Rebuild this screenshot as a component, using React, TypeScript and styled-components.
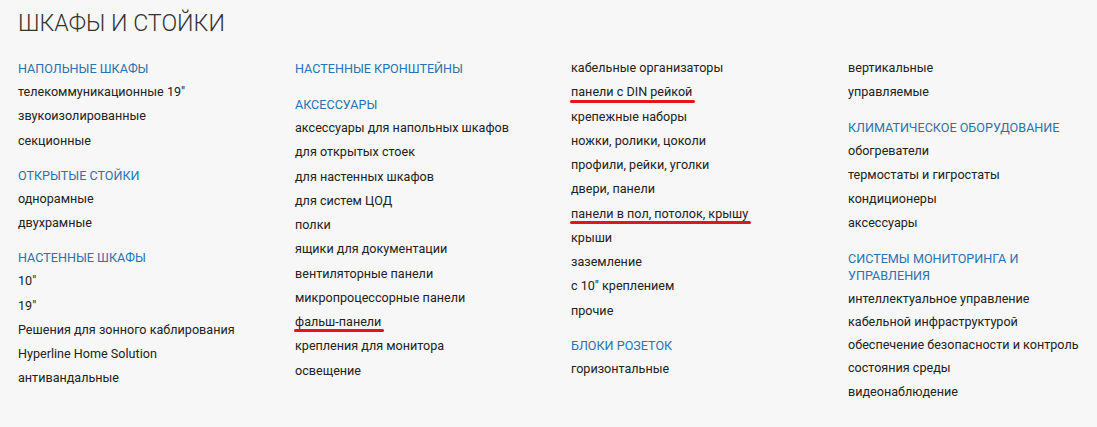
import styled, { createGlobalStyle } from "styled-components";

const GlobalStyle = createGlobalStyle`
  html, body {
    margin: 0;
    padding: 0;
    background: #f7f7f7;
  }
  body {
    font-family: Roboto, "Noto Sans", Arial, sans-serif;
    color: #222;
  }
`;

type Item = { label: string; marked?: boolean };
type Group = { title: string; items: Item[] };

const columns: Group[][] = [
    [
        {
            title: "Напольные шкафы",
            items: [{ label: "телекоммуникационные 19\"" }, { label: "звукоизолированные" }, { label: "секционные" }],
        },
        {
            title: "Открытые стойки",
            items: [{ label: "однорамные" }, { label: "двухрамные" }],
        },
        {
            title: "Настенные шкафы",
            items: [
                { label: "10\"" },
                { label: "19\"" },
                { label: "Решения для зонного каблирования" },
                { label: "Hyperline Home Solution" },
                { label: "антивандальные" },
            ],
        },
    ],
    [
        { title: "Настенные кронштейны", items: [] },
        {
            title: "Аксессуары",
            items: [
                { label: "аксессуары для напольных шкафов" },
                { label: "для открытых стоек" },
                { label: "для настенных шкафов" },
                { label: "для систем ЦОД" },
                { label: "полки" },
                { label: "ящики для документации" },
                { label: "вентиляторные панели" },
                { label: "микропроцессорные панели" },
                { label: "фальш-панели", marked: true },
                { label: "крепления для монитора" },
                { label: "освещение" },
            ],
        },
    ],
    [
        {
            title: "",
            items: [
                { label: "кабельные организаторы" },
                { label: "панели с DIN рейкой", marked: true },
                { label: "крепежные наборы" },
                { label: "ножки, ролики, цоколи" },
                { label: "профили, рейки, уголки" },
                { label: "двери, панели" },
                { label: "панели в пол, потолок, крышу", marked: true },
                { label: "крыши" },
                { label: "заземление" },
                { label: "с 10\" креплением" },
                { label: "прочие" },
            ],
        },
        { title: "Блоки розеток", items: [{ label: "горизонтальные" }] },
    ],
    [
        { title: "", items: [{ label: "вертикальные" }, { label: "управляемые" }] },
        {
            title: "Климатическое оборудование",
            items: [
                { label: "обогреватели" },
                { label: "термостаты и гигростаты" },
                { label: "кондиционеры" },
                { label: "аксессуары" },
            ],
        },
        {
            title: "Системы мониторинга и управления",
            items: [
                { label: "интеллектуальное управление кабельной инфраструктурой" },
                { label: "обеспечение безопасности и контроль состояния среды" },
                { label: "видеонаблюдение" },
            ],
        },
    ],
];

const Page = styled.div`
  padding: 8px 18px 20px;
`;

const Title = styled.h1`
  margin: 0 0 22px;
  font-size: 23.2px;
  font-weight: 300;
  line-height: 30px;
  color: #333;
  text-transform: uppercase;
`;

const Grid = styled.div`
  display: grid;
  grid-template-columns: 277px 276px 277px 1fr;
`;

const Column = styled.div`
  display: flex;
  flex-direction: column;
`;

const GroupBox = styled.div<{ $untitled?: boolean; $empty?: boolean }>`
  display: flex;
  flex-direction: column;
  margin-top: ${({ $untitled }) => ($untitled ? "-4px" : "0")};
  padding-bottom: ${({ $empty }) => ($empty ? "2px" : "0")};

  & + & {
    margin-top: 14px;
  }
`;

const GroupTitle = styled.a`
  display: block;
  max-width: 236px;
  margin-bottom: 3px;
  font-size: 12.6px;
  line-height: 17px;
  color: #2a72b2;
  text-transform: uppercase;
  text-decoration: none;
`;

const Link = styled.a<{ $marked?: boolean }>`
  display: block;
  font-size: 12.6px;
  line-height: 24.25px;
  color: #222;
  text-decoration: none;

  & span {
    position: relative;
    display: inline-block;
  }

  & span::after {
    content: "";
    display: ${({ $marked }) => ($marked ? "block" : "none")};
    position: absolute;
    left: -1px;
    right: -3px;
    bottom: 2px;
    height: 3px;
    border-radius: 2px;
    background: #e5141b;
  }
`;

// long entries in the last column break onto two lines
const WrapLink = styled(Link)`
  max-width: 236px;
  line-height: 23.3px;
`;

export default function App() {
    return (
        <Page>
            <GlobalStyle />
            <Title>Шкафы и стойки</Title>
            <Grid>
                {columns.map((groups, ci) => (
                    <Column key={ci}>
                        {groups.map((g, gi) => (
                            <GroupBox key={gi} $untitled={!g.title} $empty={g.items.length === 0}>
                                {g.title && <GroupTitle href="#">{g.title}</GroupTitle>}
                                {g.items.map((it) =>
                                    it.label.length > 40 ? (
                                        <WrapLink key={it.label} href="#">
                                            {it.label}
                                        </WrapLink>
                                    ) : (
                                        <Link key={it.label} href="#" $marked={it.marked}>
                                            <span>{it.label}</span>
                                        </Link>
                                    )
                                )}
                            </GroupBox>
                        ))}
                    </Column>
                ))}
            </Grid>
        </Page>
    );
}
